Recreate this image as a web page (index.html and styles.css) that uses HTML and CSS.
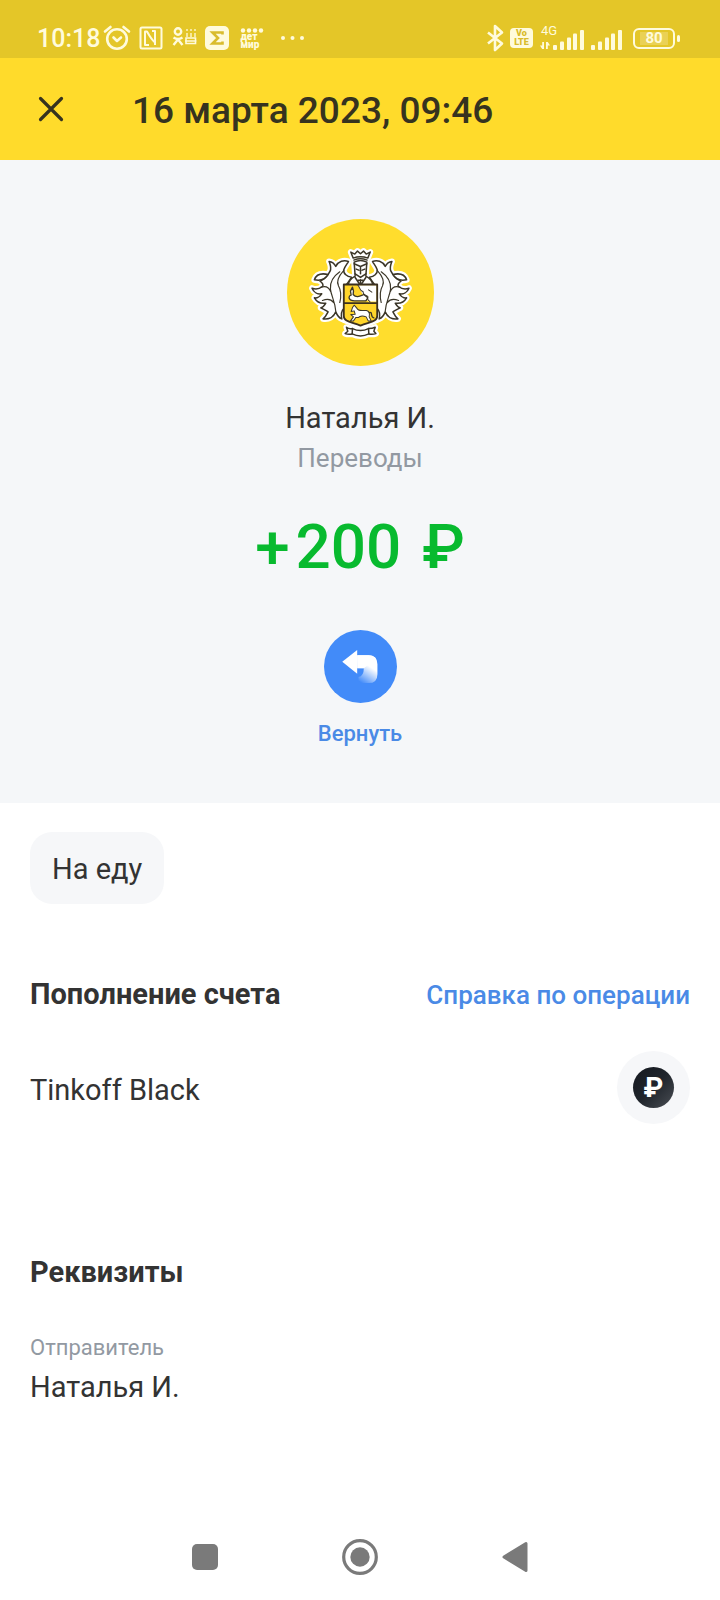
FILE: index.html
```html
<!DOCTYPE html>
<html lang="ru">
<head>
<meta charset="utf-8">
<meta name="viewport" content="width=device-width, initial-scale=1">
<title>16 марта 2023, 09:46</title>
<link rel="stylesheet" href="styles.css">
</head>
<body>
<div class="screen">
  <div class="status">
    <div class="status-group status-left">
      <span class="clock">10:18</span>
      <svg class="ico" width="28" height="26" viewBox="0 0 28 26" fill="none" stroke="currentColor" stroke-width="2.6" stroke-linecap="round" stroke-linejoin="round"><circle cx="14" cy="14" r="9.8"/><path d="M2 6.500 7.500 2M26 6.500 20.500 2M10.500 12.500 14 16l4-3.500"/></svg>
      <svg class="ico" width="24" height="26" viewBox="0 0 24 26" fill="none" stroke="currentColor" stroke-width="2" stroke-linejoin="round"><rect x="1.500" y="2.500" width="21" height="21" rx="1.500"/><path d="M10 20H6V6.500H8C10.500 11 13 15 16 17.500V6H13M16 17.500V20"/></svg>
      <svg class="ico" width="26" height="26" viewBox="0 0 26 26" fill="none" stroke="currentColor" stroke-width="2.400"><circle cx="7" cy="6.500" r="3.200"/><path d="M2.500 12.500q4.500 3 9 0M7 14.500 2.500 20M7 14.500l4.500 5.500"/><path d="M15 13h9.500v5.500H15zM14 16h11.500" stroke-width="1.600"/><path d="M16 8v4M20 8v4M24 8v4M16 4v2M20 4v2M24 4v2" stroke-width="1.300"/></svg>
      <svg class="ico" width="24" height="26" viewBox="0 0 24 26"><rect y="1" width="24" height="24" rx="5" fill="currentColor"/><path d="M17.500 9.500V7.500H7.500l5.500 5.500-5.500 5.500H17.500v-2" fill="none" stroke="#d9bc2c" stroke-width="2.600"/></svg>
      <div class="detmir"><svg width="24" height="5" viewBox="0 0 24 5" fill="currentColor"><circle cx="3" cy="2.500" r="2.200"/><circle cx="9" cy="2.500" r="2.200"/><circle cx="15" cy="2.500" r="2.200"/><circle cx="21" cy="2.500" r="2.200"/></svg><span>дет</span><span>мир</span></div>
      <svg class="ico dots" width="26" height="26" viewBox="0 0 26 26" fill="currentColor"><circle cx="3" cy="13" r="2"/><circle cx="12.500" cy="13" r="2"/><circle cx="22" cy="13" r="2"/></svg>
    </div>
    <div class="status-group status-right">
      <svg class="ico" width="18" height="28" viewBox="0 0 18 28" fill="none" stroke="currentColor" stroke-width="2.600" stroke-linejoin="round"><path d="M2 8.500l14 11-7 6.500V2l7 6.500L2 19.500"/></svg>
      <span class="volte"><span>Vo</span><span>LTE</span></span>
      <span class="net"><span class="net-type">4G</span>
      <svg width="46" height="26" viewBox="0 0 46 26" fill="currentColor"><path d="M5 17v7H3.200L1 20.500h2.200V17zM7 24v-7H8.800l2.200 3.500H8.800V24z"/><rect x="14" y="20" width="4" height="5" rx="1"/><rect x="21" y="16.500" width="4" height="8.500" rx="1"/><rect x="28" y="12.500" width="4" height="12.500" rx="1"/><rect x="34" y="8.500" width="4" height="16.500" rx="1"/><rect x="41" y="5" width="4" height="20" rx="1"/></svg></span>
      <svg class="ico" width="32" height="26" viewBox="0 0 32 26" fill="currentColor"><rect y="20" width="4" height="5" rx="1"/><rect x="7" y="16.500" width="4" height="8.500" rx="1"/><rect x="14" y="12.500" width="4" height="12.500" rx="1"/><rect x="20" y="8.500" width="4" height="16.500" rx="1"/><rect x="27" y="5" width="4" height="20" rx="1"/></svg>
      <span class="battery"><span class="battery-body"><span class="battery-level">80</span></span><span class="battery-tip"></span></span>
    </div>
  </div>

  <header class="header">
    <button class="close" type="button" aria-label="Закрыть"><svg width="26" height="26" viewBox="0 0 26 26" fill="none" stroke="#36331f" stroke-width="3.200" stroke-linecap="round"><path d="M2.500 2.500l21 21M23.500 2.500l-21 21"/></svg></button>
    <h1 class="title">16 марта 2023, 09:46</h1>
  </header>

  <section class="hero">
    <svg class="avatar" viewBox="20 26 440 440" fill="none" stroke-linejoin="round" stroke-linecap="round">
      <defs>
        <path id="wing" d="M190 232C200 220 207 212 213 200C200 198 188 190 190 178C194 166 201 160 204 153C190 148 174 152 166 168C162 160 156 154 146 153C150 164 154 172 149 182C142 196 132 206 119 212C127 218 130 224 126 228C116 236 106 238 95 233C100 246 112 252 124 250C118 258 110 264 102 262C110 276 122 280 136 278C132 286 128 290 121 292C132 298 138 300 143 304C138 314 134 320 128 325C146 328 160 318 166 304C170 314 176 322 184 325C181 310 184 300 190 294Z"/>
        <path id="leaf" d="M102 208C108 190 125 188 143 192C135 206 120 212 102 208Z"/>
        <path id="ribbon" d="M198 350C206 356 210 354 216 354Q240 366 264 354C270 354 276 354 284 350L280 362 286 369C278 372 272 372 265 370Q240 382 215 370C208 372 202 372 194 369L202 362Z"/>
        <path id="crown" d="M211 125L218 143Q240 135 262 143L269 125 257 131 249 122 240 130 231 122 223 131Z"/>
        <path id="body" d="M204 224C204 212 210 204 224 197L221 155Q240 145 259 155L256 197C270 204 276 212 276 224Z"/>
      </defs>
      <circle cx="240" cy="246" r="220" fill="#ffdd2d"/>
      <g fill="#fff" stroke="#fff" stroke-width="18">
        <use href="#wing"/><use href="#leaf"/>
        <g transform="matrix(-1 0 0 1 480 0)"><use href="#wing"/><use href="#leaf"/></g>
        <use href="#ribbon"/><use href="#crown"/><use href="#body"/>
        <path d="M190 222H290V328L240 347 190 328Z"/>
      </g>
      <g id="plumes" fill="#fff" stroke="#3b3628" stroke-width="4.500">
        <use href="#wing"/><use href="#leaf"/>
        <path d="M178 184C158 198 148 216 150 236C152 256 164 272 166 302M122 230C136 226 146 230 151 244M126 270C142 264 152 266 159 276M190 180C172 200 168 214 174 226C182 240 184 252 178 276" stroke-width="3.500" fill="none"/>
      </g>
      <use href="#plumes" transform="matrix(-1 0 0 1 480 0)"/>
      <g fill="#fff" stroke="#3b3628" stroke-width="4.500">
        <use href="#ribbon"/><path d="M216 354L215 370M264 354L265 370"/>
        <use href="#body"/>
        <path d="M221 160L240 168 259 160M240 168V190M224 190L240 201 256 190M227 176L235 179M253 176L245 179M224 201L238 222M256 201L242 222M240 208V221M233 209H247" fill="none"/>
        <use href="#crown"/><path d="M220 149Q240 141 260 149" />
      </g>
      <path d="M190 222H290V316C290 334 266 334 240 345C214 334 190 334 190 316Z" fill="#ffd52b"/>
      <path d="M232 224H288V273H264L252 262Z" fill="#fff"/>
      <g fill="#fff" stroke="#3b3628" stroke-width="4">
        <path d="M210 268C204 264 204 256 212 254L210 242 216 230 219 242 218 252C228 264 240 256 250 252L262 262 256 271H226C218 272 214 270 210 268Z"/>
        <path d="M232 224C240 232 236 240 248 244C246 252 254 252 262 258C258 266 264 270 268 273M264 238L274 245" fill="none" stroke-width="3"/>
        <path d="M212 303L216 291 221 284 229 293C234 304 248 298 258 300C266 302 268 310 266 319L272 331H263L257 319C246 314 238 316 233 321L226 321 219 331H210L219 319 211 312 224 311 221 301Z" stroke-width="3"/>
        <path d="M266 306C278 302 268 320 280 322" fill="none"/>
      </g>
      <path d="M190 278H290M190 222H290V316C290 334 266 334 240 345C214 334 190 334 190 316Z" stroke="#3b3020" stroke-width="5.500"/>
    </svg>
    <p class="name">Наталья И.</p>
    <p class="category">Переводы</p>
    <p class="amount"><span>+</span><span>200</span><span class="currency">₽</span></p>
    <button class="refund" type="button">
      <svg class="refund-icon" viewBox="100 62 220 220">
        <defs><linearGradient id="fade" gradientUnits="userSpaceOnUse" x1="244" y1="176" x2="214" y2="222"><stop offset="0" stop-color="#fff"/><stop offset="1" stop-color="#fff" stop-opacity="0"/></linearGradient></defs>
        <circle cx="210" cy="172" r="110" fill="#428bf9"/>
        <path d="M155 158L200 122V194Z" fill="#fff"/>
        <path d="M200 138H234Q261 138 261 165V195Q261 222 234 222H204V204Q220 200 220 177H200Z" fill="url(#fade)"/>
        <path d="M200 138H234Q250 138 257 150L220 177H200Z" fill="#fff"/>
      </svg>
      <span>Вернуть</span>
    </button>
  </section>

  <main class="details">
    <button class="chip" type="button">На еду</button>
    <section class="account">
      <div class="row">
        <h2 class="heading">Пополнение счета</h2>
        <a class="link" href="#">Справка по операции</a>
      </div>
      <div class="row">
        <span class="card-name">Tinkoff Black</span>
        <span class="card-icon"><span class="coin">₽</span></span>
      </div>
    </section>
    <section class="requisites">
      <h2 class="heading">Реквизиты</h2>
      <dl class="field">
        <dt>Отправитель</dt>
        <dd>Наталья И.</dd>
      </dl>
    </section>
  </main>

  <nav class="nav">
    <button type="button" aria-label="Недавние"><svg width="36" height="36" viewBox="0 0 36 36"><rect x="5" y="5" width="26" height="26" rx="5" fill="#7a7a7a"/></svg></button>
    <button type="button" aria-label="Домой"><svg width="36" height="36" viewBox="0 0 36 36"><circle cx="18" cy="18" r="16.300" fill="none" stroke="#7a7a7a" stroke-width="3.200"/><circle cx="18" cy="18" r="9.700" fill="#7a7a7a"/></svg></button>
    <button type="button" aria-label="Назад"><svg width="36" height="36" viewBox="0 0 36 36"><path d="M7 18L29 4.500V31.500Z" fill="#7a7a7a" stroke="#7a7a7a" stroke-width="3" stroke-linejoin="round"/></svg></button>
  </nav>
</div>
</body>
</html>
```

FILE: styles.css
```css
* { box-sizing: border-box; }

body {
  margin: 0;
  background: #fff;
  color: #333;
  font-family: Roboto, "Noto Sans", sans-serif;
  font-size: 29px;
  line-height: 40px;
}

h1, h2, p, dl, dd { margin: 0; }

button {
  padding: 0;
  border: 0;
  background: none;
  color: inherit;
  font: inherit;
}

svg { display: block; flex: none; }

.screen {
  display: flex;
  flex-direction: column;
  min-height: 100vh;
}

/* Status bar */
.status {
  display: flex;
  justify-content: space-between;
  padding: 18px 40px 0 37px;
  height: 58px;
  background: #e4c628;
  color: #fffbdc;
}

.status-group { display: flex; align-items: center; height: 40px; }
.status-left { gap: 8px; }
.status-right { gap: 6px; }

.clock { margin-right: -5px; padding-top: 2px; font-size: 25px; font-weight: 500; }

.detmir {
  display: flex;
  flex-direction: column;
  margin-left: 3px;
  font-size: 10px;
  font-weight: 900;
  line-height: 8px;
}

.dots { margin-left: 8px; }

.volte {
  display: flex;
  flex-direction: column;
  align-items: center;
  padding-top: 1px;
  width: 23px;
  height: 20px;
  border-radius: 4px;
  background: currentColor;
  font-size: 9px;
  font-weight: 900;
  line-height: 9px;
}

.volte span { color: #d9bc2c; }

.net { position: relative; }

.net-type {
  position: absolute;
  top: 0;
  left: 2px;
  font-size: 13px;
  line-height: 12px;
}

.battery { display: flex; align-items: center; gap: 2px; margin-left: 4px; }

.battery-body {
  padding: 2px 5px;
  width: 42px;
  height: 21px;
  border: 2px solid currentColor;
  border-radius: 6px;
  font-size: 15px;
  font-weight: 700;
  line-height: 13px;
  text-align: center;
}

.battery-level { display: block; background: #ead155; }

.battery-tip {
  width: 3px;
  height: 7px;
  border-radius: 2px;
  background: currentColor;
}

/* Title bar */
.header {
  display: flex;
  align-items: center;
  gap: 68px;
  padding: 0 38px;
  height: 102px;
  background: #ffdb2b;
  color: #36331f;
}

.title {
  padding-top: 4px;
  font-size: 37px;
  font-weight: 500;
  line-height: 48px;
}

/* Operation summary */
.hero {
  display: flex;
  flex-direction: column;
  align-items: center;
  padding: 59px 30px 54px;
  background: #f5f7f9;
}

.avatar { margin-bottom: 32px; width: 147px; height: 147px; }

.category { color: #9299a2; font-size: 26px; }

.amount {
  display: flex;
  gap: 6px;
  margin: 31px 0 45px;
  color: #08ba2f;
  font-size: 62px;
  font-weight: 500;
  line-height: 76px;
}

.currency { margin-left: 15px; }

.refund {
  display: flex;
  flex-direction: column;
  align-items: center;
  gap: 16px;
  color: #4a8ae6;
  font-size: 22px;
  font-weight: 500;
  line-height: 30px;
}

.refund-icon { width: 73px; height: 73px; }

/* Details */
.details { padding: 29px 30px; }

.chip {
  padding: 17px 22px 15px;
  border-radius: 22px;
  background: #f6f7f9;
}

.account { display: grid; gap: 36px; margin-top: 69px; }

.row { display: flex; align-items: center; justify-content: space-between; }

.heading { font-size: 29px; font-weight: 700; }

.link {
  padding-top: 2px;
  color: #4a8ae6;
  font-size: 26px;
  font-weight: 500;
  text-decoration: none;
}

.card-name { padding-top: 4px; }

.card-icon {
  display: grid;
  place-items: center;
  width: 73px;
  height: 73px;
  border-radius: 50%;
  background: #f6f7f9;
}

.coin {
  width: 41px;
  height: 41px;
  border-radius: 50%;
  background: linear-gradient(135deg, #14181f, #20252c 50%, #4a4e54);
  color: #fff;
  font-size: 28px;
  font-weight: 700;
  line-height: 41px;
  text-align: center;
}

.requisites { margin-top: 128px; }

.field { margin-top: 41px; }

.field dt {
  margin-bottom: 4px;
  color: #9299a2;
  font-size: 22px;
  line-height: 30px;
}

/* System navigation */
.nav {
  display: grid;
  grid-template-columns: repeat(3, 1fr);
  margin-top: auto;
  padding: 0 127px;
  height: 87px;
}

.nav button { display: grid; place-items: center; }
```
